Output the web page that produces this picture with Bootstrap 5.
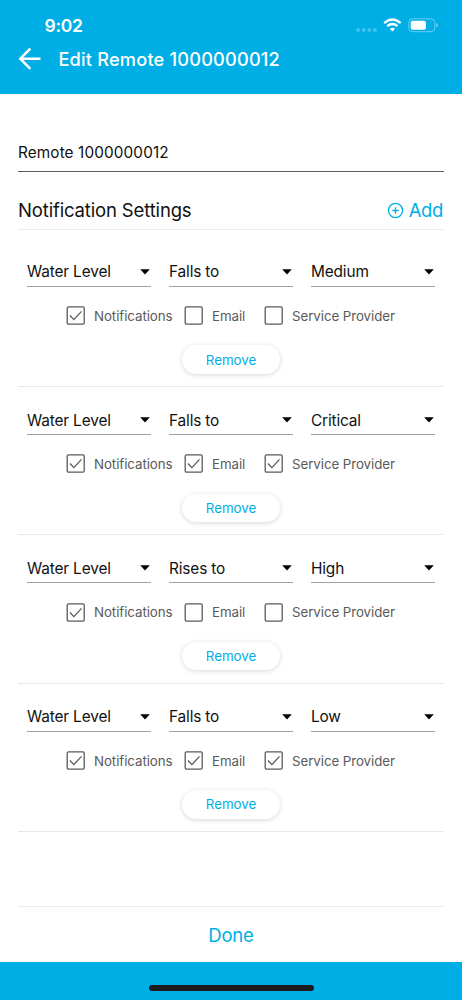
<!DOCTYPE html>
<html lang="en">
<head>
<meta charset="utf-8">
<meta name="viewport" content="width=device-width, initial-scale=1">
<title>Edit Remote</title>
<link href="https://cdn.jsdelivr.net/npm/bootstrap@5.3.0/dist/css/bootstrap.min.css" rel="stylesheet">
<style>
  :root { --brand: #00aee6; }
  body { font-family: Inter, "Liberation Sans", sans-serif; color: #111; height: 1000px; overflow: hidden; line-height: 1; white-space: nowrap; }
  svg { display: block; flex: none; }
  .topbar { background: var(--brand); height: 94px; }
  .status { height: 42px; padding: 10px 24px 0 44.5px; }
  .clock { font-size: 17.5px; font-weight: 600; letter-spacing: -.3px; }
  .titlebar { height: 34px; padding-left: 18px; gap: 17.4px; }
  .titlebar h1 { font-size: 18.2px; font-weight: 500; letter-spacing: .2px; line-height: 1; }
  .page { width: 426px; }
  .remote-name { margin-top: 38px; height: 40px; padding-top: 13.4px; border-bottom: 1px solid #5c5c5c; font-size: 15.3px; letter-spacing: .13px; }
  .section-head { height: 58px; padding-top: 19px; border-bottom: 1px solid #ebebeb; }
  .section-head h2 { font-size: 18.5px; font-weight: 400; letter-spacing: -.15px; line-height: 20px; }
  .add-link, .done-link { color: var(--brand); font-size: 18.5px; text-decoration: none; }
  .add-link { gap: 5px; letter-spacing: -.35px; padding: 1px 1px 0 0; }
  .done-link { letter-spacing: -.2px; padding-top: 1px; }
  .rules { padding-top: 8.8px; }
  .rule { height: 148.3px; padding: 18.2px 9px 0; border-bottom: 1px solid #e8e8e8; }
  .picks { gap: 18px; }
  .pick { flex: 1 1 0; height: 29.7px; border-bottom: 1px solid #a0a0a0; padding: 1px 1px 0 0; font-size: 15.4px; letter-spacing: -.15px; }
  .pick span { padding-top: .6px; }
  .checks { height: 19px; margin-top: 19.3px; padding-left: 39px; color: #5a5a5a; font-size: 13.3px; }
  .checks svg { margin-right: 9px; }
  .checks span { padding-top: 2px; letter-spacing: -.06px; }
  .check-a { width: 118px; } .check-b { width: 80px; }
  .remove { width: 98px; height: 28.5px; margin-top: 20.3px; padding: 2px 0 0; font-size: 13.3px; color: var(--brand); background: #fff; border: 0; box-shadow: 0 1px 5px rgba(0,0,0,.16); }
  .done-bar { height: 56px; margin: 0 18px; border-top: 1px solid #ebebeb; }
  .home-area { height: 38px; background: var(--brand); padding-top: 23px; }
  .home-pill { width: 165px; height: 6px; background: #1c1c1c; }
</style>
</head>
<body class="d-flex flex-column m-0 bg-white">
<header class="topbar text-white">
  <div class="status d-flex align-items-center">
    <span class="clock">9:02</span>
    <div class="d-flex align-items-center ms-auto">
      <svg width="84" height="18" viewBox="0 0 84 18">
        <g fill="#fff" fill-opacity=".25"><circle cx="4.1" cy="12.9" r="2"/><circle cx="9.7" cy="12.9" r="2"/><circle cx="15.4" cy="12.9" r="2"/><circle cx="20.9" cy="12.9" r="2"/></g>
        <g fill="none" stroke="#fff" stroke-width="2.4"><path d="M30.2 6.1Q38.4-.9 46.6 6.1"/><path d="M33.3 9.2Q38.4 4.9 43.5 9.2"/></g>
        <path fill="#fff" d="M35.8 11.8Q38.4 9.6 41 11.8L38.4 14.5Z"/>
        <rect x="54.8" y="1.8" width="26" height="12.9" rx="3.8" fill="none" stroke="#fff" stroke-opacity=".4"/>
        <rect x="56.7" y="3.7" width="15.3" height="9.1" rx="2" fill="#fff"/>
        <path fill="#fff" fill-opacity=".45" d="M82.2 6q1.6.6 1.6 2.2t-1.6 2.2z"/>
      </svg>
    </div>
  </div>
  <div class="titlebar d-flex align-items-center">
    <svg width="23" height="22" viewBox="0 0 23 22" fill="none" stroke="#fff" stroke-width="2.5"><path d="M22.5 10.7H2.3M12.3 .6 2.3 10.7l10 10.1"/></svg>
    <h1 class="m-0">Edit Remote 1000000012</h1>
  </div>
</header>
<main class="flex-grow-1">
  <div class="page mx-auto">
    <div class="remote-name">Remote 1000000012</div>
    <div class="section-head d-flex align-items-center justify-content-between">
      <h2 class="m-0">Notification Settings</h2>
      <a href="#" class="add-link d-flex align-items-center">
        <svg width="17" height="17" viewBox="0 0 17 17" fill="none" stroke="#00aee6" stroke-width="1.3"><circle cx="8.5" cy="8.5" r="7.1"/><path d="M8.5 5.3v6.4M5.3 8.5h6.4"/></svg>
        <span>Add</span></a>
    </div>
    <div class="rules" id="rules"></div>
  </div>
</main>
<footer>
  <div class="done-bar d-flex align-items-center justify-content-center"><a href="#" class="done-link">Done</a></div>
  <div class="home-area d-flex justify-content-center"><div class="home-pill rounded-pill"></div></div>
</footer>
<script>
  const rules = [
    ['Falls to', 'Medium', [1, 0, 0]],
    ['Falls to', 'Critical', [1, 1, 1]],
    ['Rises to', 'High', [1, 0, 0]],
    ['Falls to', 'Low', [1, 1, 1]]
  ];
  const pick = t => `<div class="pick d-flex align-items-center justify-content-between"><span>${t}</span><svg width="10" height="6" viewBox="0 0 10 6"><path d="M.2.3h9.6L5 5.6z"/></svg></div>`;
  const check = (t, on, c) => `<div class="${c} d-flex align-items-center"><svg width="19" height="19" viewBox="0 0 19 19" fill="none" stroke="#5a5a5a" stroke-width="1.3"><rect x="1.2" y=".9" width="17" height="17.2" rx="1.3"/>${on ? '<path d="m4 9.5 3.9 4.1 7.6-8.2"/>' : ''}</svg><span>${t}</span></div>`;
  document.getElementById('rules').innerHTML = rules.map(([cond, level, on]) => `
    <section class="rule">
      <div class="picks d-flex">${pick('Water Level')}${pick(cond)}${pick(level)}</div>
      <div class="checks d-flex">${check('Notifications', on[0], 'check-a')}${check('Email', on[1], 'check-b')}${check('Service Provider', on[2], 'check-c')}</div>
      <button class="remove btn rounded-pill d-block mx-auto">Remove</button>
    </section>`).join('');
</script>
<script src="https://cdn.jsdelivr.net/npm/bootstrap@5.3.0/dist/js/bootstrap.bundle.min.js"></script>
</body>
</html>
